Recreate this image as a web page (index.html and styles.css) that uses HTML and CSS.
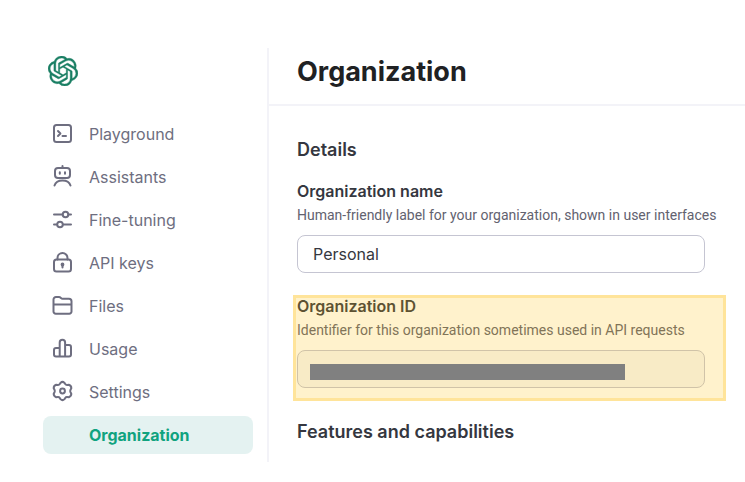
FILE: index.html
```html
<!DOCTYPE html>
<html lang="en">
<head>
<meta charset="utf-8">
<title>Organization</title>
<link rel="stylesheet" href="styles.css">
</head>
<body>
<div class="app">
  <aside class="sidebar">
    <a class="logo" href="#" aria-label="Home">
      <svg viewBox="0 0 24 24" fill="currentColor" stroke="currentColor" stroke-width=".3"><path d="M22.2819 9.8211a5.9847 5.9847 0 0 0-.5157-4.9108 6.0462 6.0462 0 0 0-6.5098-2.9A6.0651 6.0651 0 0 0 4.9807 4.1818a5.9847 5.9847 0 0 0-3.9977 2.9 6.0462 6.0462 0 0 0 .7427 7.0966 5.98 5.98 0 0 0 .511 4.9107 6.051 6.051 0 0 0 6.5146 2.9001A5.9847 5.9847 0 0 0 13.2599 24a6.0557 6.0557 0 0 0 5.7718-4.2058 5.9894 5.9894 0 0 0 3.9977-2.9001 6.0557 6.0557 0 0 0-.7475-7.0729zm-9.022 12.6081a4.4755 4.4755 0 0 1-2.8764-1.0408l.1419-.0804 4.7783-2.7582a.7948.7948 0 0 0 .3927-.6813v-6.7369l2.02 1.1686a.071.071 0 0 1 .038.052v5.5826a4.504 4.504 0 0 1-4.4945 4.4944zm-9.6607-4.1254a4.4708 4.4708 0 0 1-.5346-3.0137l.142.0852 4.783 2.7582a.7712.7712 0 0 0 .7806 0l5.8428-3.3685v2.3324a.0804.0804 0 0 1-.0332.0615L9.74 19.9502a4.4992 4.4992 0 0 1-6.1408-1.6464zM2.3408 7.8956a4.485 4.485 0 0 1 2.3655-1.9728V11.6a.7664.7664 0 0 0 .3879.6765l5.8144 3.3543-2.0201 1.1685a.0757.0757 0 0 1-.071 0l-4.8303-2.7865A4.504 4.504 0 0 1 2.3408 7.872zm16.5963 3.8558L13.1038 8.364 15.1192 7.2a.0757.0757 0 0 1 .071 0l4.8303 2.7913a4.4944 4.4944 0 0 1-.6765 8.1042v-5.6772a.79.79 0 0 0-.407-.667zm2.0107-3.0231l-.142-.0852-4.7735-2.7818a.7759.7759 0 0 0-.7854 0L9.409 9.2297V6.8974a.0662.0662 0 0 1 .0284-.0615l4.8303-2.7866a4.4992 4.4992 0 0 1 6.6802 4.66zM8.3065 12.863l-2.02-1.1638a.0804.0804 0 0 1-.038-.0567V6.0742a4.4992 4.4992 0 0 1 7.3757-3.4537l-.142.0805L8.704 5.459a.7948.7948 0 0 0-.3927.6813zm1.0976-2.3654l2.602-1.4998 2.6069 1.4998v2.9994l-2.5974 1.4997-2.6067-1.4997Z"/></svg>
    </a>
    <nav class="nav">
      <a class="nav-item" href="#"><svg viewBox="0 0 20 20"><rect x="2" y="1" width="17" height="17" rx="2.5"/><path d="M6 7l2.4 2.5L6 12M10.500 12h3.500"/></svg>Playground</a>
      <a class="nav-item" href="#"><svg viewBox="0 0 20 20"><path d="M10.500-1v2"/><rect x="3" y="1" width="15" height="10" rx="3"/><path d="M7.800 5.200v1.600M13 5.200v1.600M2.500 18.500c1-3.300 4-5 8-5s7 1.700 8 5"/></svg>Assistants</a>
      <a class="nav-item" href="#"><svg viewBox="0 0 20 20"><path d="M2 4.500h8.500M16.500 4.500H19M2 14.500h3M11 14.500h8"/><circle cx="13.500" cy="4.500" r="2.800"/><circle cx="8" cy="14.500" r="2.800"/></svg>Fine-tuning</a>
      <a class="nav-item" href="#"><svg viewBox="0 0 20 20"><rect x="2" y="6.500" width="17" height="12" rx="2.500"/><path d="M5.500 6.500V5a5 5 0 0 1 10 0v1.500M10.500 11.500v3"/><circle cx="10.500" cy="11.500" r=".9"/></svg>API keys</a>
      <a class="nav-item" href="#"><svg viewBox="0 0 20 20"><path d="M1.500 15.500V3.500A2.500 2.500 0 0 1 4 1h3c1.800 0 2 1.800 3.500 1.800h6.500a2.500 2.500 0 0 1 2.500 2.500v10.200a2.200 2.200 0 0 1-2.200 2.200H3.700a2.200 2.200 0 0 1-2.200-2.200zM1.500 8.500h18"/></svg>Files</a>
      <a class="nav-item" href="#"><svg viewBox="0 0 20 20"><path d="M7.700 17.500H4a2 2 0 0 1-2-2V11a2 2 0 0 1 2-2h3.700zM7.700 17.500V3.500a2.700 2.700 0 0 1 5.400 0v14zM13.100 6H17a2 2 0 0 1 2 2v7.500a2 2 0 0 1-2 2h-3.900"/></svg>Usage</a>
      <a class="nav-item" href="#"><svg viewBox="0 0 20 20"><path d="M8.500 .9Q10.500-1.100 12.500 .9l.7 1.100q.7 1 2 .9l1.600-.1q2.700 1 2.500 3.500l-.8 1.500q-.6 1.200 0 2.400l.8 1.500q.2 2.500-2.500 3.500l-1.600-.1q-1.300-.1-2 .9l-.7 1.100q-2 2-4 0l-.7-1.100q-.7-1-2-.9l-1.600.1q-2.700-1-2.500-3.500l.8-1.500q.6-1.200 0-2.400l-.8-1.500q-.2-2.500 2.500-3.500l1.600.1q1.300.1 2-.9z"/><circle cx="10.500" cy="9" r="2.400"/></svg>Settings</a>
      <a class="nav-item active" href="#" aria-current="page">Organization</a>
    </nav>
  </aside>
  <main class="main">
    <header class="header"><h1>Organization</h1></header>
    <form class="content">
      <h2>Details</h2>
      <div class="field">
        <label for="org-name">Organization name</label>
        <p id="name-help">Human-friendly label for your organization, shown in user interfaces</p>
        <input id="org-name" type="text" value="Personal" aria-describedby="name-help">
      </div>
      <div class="field marked">
        <label for="org-id">Organization ID</label>
        <p id="id-help">Identifier for this organization sometimes used in API requests</p>
        <input id="org-id" type="text" disabled aria-describedby="id-help">
        <span class="highlight"></span>
        <span class="redaction"></span>
      </div>
      <h2>Features and capabilities</h2>
    </form>
  </main>
</div>
</body>
</html>
```
FILE: styles.css
```css
* { box-sizing: border-box; }

body {
  margin: 0;
  background: #fff;
  color: #353740;
  font-family: Inter, "Liberation Sans", sans-serif;
  font-size: 16px;
  line-height: 24px;
}

h1, h2, p { margin: 0; }

.app {
  display: flex;
  padding: 48px 0 20px;
}

.sidebar {
  flex: 0 0 269px;
  padding: 8px 14px 8px 43px;
  border-right: 2px solid #f3f3f8;
}

.logo {
  display: block;
  width: 30px;
  height: 30px;
  margin-left: 5px;
  color: #1a7f64;
}

.logo svg {
  display: block;
  width: 100%;
  height: 100%;
}

.nav {
  display: flex;
  flex-direction: column;
  gap: 5px;
  margin-top: 29px;
}

.nav-item {
  display: flex;
  align-items: center;
  gap: 17px;
  height: 38px;
  padding-left: 9px;
  border-radius: 8px;
  color: #6e6e80;
  text-decoration: none;
}

.nav-item svg {
  width: 20px;
  height: 20px;
  overflow: visible;
  fill: none;
  stroke: currentColor;
  stroke-width: 2;
  stroke-linecap: round;
  stroke-linejoin: round;
}

.nav-item.active {
  padding-left: 46px;
  background: #e4f2f1;
  color: #10a37f;
  font-weight: 700;
}

.main {
  flex: 1;
  min-width: 0;
}

.header {
  padding: 4px 28px 12px;
  border-bottom: 2px solid #f3f3f8;
}

h1 {
  color: #202123;
  font-size: 27px;
  font-weight: 700;
  line-height: 40px;
}

.content { padding: 32px 0 0 28px; }

h2 {
  font-size: 18px;
  font-weight: 600;
  line-height: 24px;
}

.field {
  position: relative;
  max-width: 408px;
  margin-top: 17px;
}

.field label {
  display: block;
  font-weight: 600;
}

.field p {
  color: #62626f;
  font-family: Roboto, "Liberation Sans", sans-serif;
  font-size: 14px;
  white-space: nowrap;
}

.field input {
  display: block;
  width: 100%;
  height: 38px;
  margin-top: 8px;
  padding: 0 15px;
  border: 1px solid #c5c5d2;
  border-radius: 8px;
  background: #fff;
  color: #353740;
  font: inherit;
}

.field input:disabled { background: #f7f7f8; }

.field.marked { margin: 21px 0 32px; }

.highlight {
  position: absolute;
  inset: 1px -21px -13px -4px;
  border: 3px solid rgba(255, 204, 60, 0.35);
  background: rgba(255, 192, 0, 0.2);
  pointer-events: none;
}

.redaction {
  position: absolute;
  left: 13px;
  right: 80px;
  bottom: 8px;
  height: 16px;
  background: #808080;
}
```
